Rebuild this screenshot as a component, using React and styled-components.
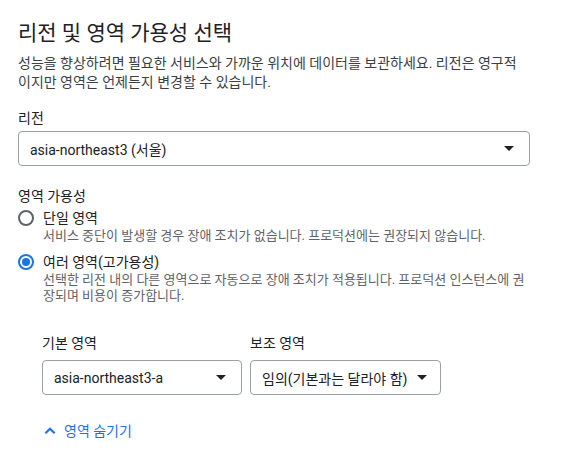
import React from "react";
import styled, { createGlobalStyle } from "styled-components";

const Global = createGlobalStyle`
  html, body { margin: 0; padding: 0; background: #fff; }
  body { font-family: Roboto, "Noto Sans CJK KR", sans-serif; color: #202124; }
`;

const Page = styled.div`
  width: 512px;
  padding: 19px 0 0 18px;
`;

const Title = styled.h1`
  margin: 0;
  font-size: 21px;
  line-height: 28px;
  font-weight: 400;
  color: #202124;
`;

const Desc = styled.p`
  margin: 7px 0 0;
  width: 508px;
  font-size: 14px;
  line-height: 19px;
  color: #3c4043;
`;

const FieldLabel = styled.div`
  margin-top: ${(p) => p.$mt || 0}px;
  font-size: 14px;
  line-height: 20px;
  color: #202124;
`;

const SelectBox = styled.div`
  margin-top: ${(p) => p.$mt ?? 7}px;
  box-sizing: border-box;
  width: ${(p) => (p.$width ? `${p.$width}px` : "auto")};
  height: 35px;
  display: ${(p) => (p.$inline ? "inline-flex" : "flex")};
  align-items: center;
  justify-content: space-between;
  gap: 10px;
  padding: 0 ${(p) => (p.$inline ? 13 : 15)}px 0 11px;
  border: 1px solid #9aa0a6;
  border-radius: 4px;
  font-size: 14px;
  color: #202124;
`;

const Caret = styled.span`
  width: 0;
  height: 0;
  border-left: 5px solid transparent;
  border-right: 5px solid transparent;
  border-top: 5px solid #202124;
  flex: none;
`;

const RadioGroup = styled.div`
  margin-top: 2px;
  display: flex;
  flex-direction: column;
  gap: 8px;
`;

const RadioRow = styled.div`
  display: grid;
  grid-template-columns: 16px 1fr;
  column-gap: 9px;
  align-items: center;
`;

const RadioCircle = styled.span`
  box-sizing: border-box;
  width: 16px;
  height: 16px;
  border-radius: 50%;
  border: 2px solid ${(p) => (p.$checked ? "#1a73e8" : "#5f6368")};
  display: flex;
  align-items: center;
  justify-content: center;
  &::after {
    content: "";
    width: 8px;
    height: 8px;
    border-radius: 50%;
    background: ${(p) => (p.$checked ? "#1a73e8" : "transparent")};
  }
`;

const RadioTitle = styled.span`
  font-size: 14px;
  line-height: 20px;
  color: #202124;
`;

const RadioHint = styled.div`
  grid-column: 2;
  max-width: 482px;
  font-size: 13px;
  line-height: 16px;
  color: #5f6368;
`;

const Zones = styled.div`
  margin-top: 29px;
  padding-left: 24px;
  display: flex;
  gap: 8px;
`;

const ZoneCol = styled.div`
  display: flex;
  flex-direction: column;
  align-items: flex-start;
`;

const ToggleLink = styled.div`
  margin-top: 26px;
  padding-left: 25px;
  display: flex;
  align-items: center;
  gap: 7px;
  font-size: 14px;
  line-height: 20px;
  color: #1a73e8;
`;

function Radio({ checked, title, hint }) {
  return (
    <RadioRow>
      <RadioCircle $checked={checked} />
      <RadioTitle>{title}</RadioTitle>
      <RadioHint>{hint}</RadioHint>
    </RadioRow>
  );
}

export default function App() {
  return (
    <Page>
      <Global />
      <Title>리전 및 영역 가용성 선택</Title>
      <Desc>
        성능을 향상하려면 필요한 서비스와 가까운 위치에 데이터를 보관하세요. 리전은 영구적이지만 영역은 언제든지 변경할 수 있습니다.
      </Desc>
      <FieldLabel $mt={16}>리전</FieldLabel>
      <SelectBox $mt={3}>
        <span>asia-northeast3 (서울)</span>
        <Caret />
      </SelectBox>
      <FieldLabel $mt={20}>영역 가용성</FieldLabel>
      <RadioGroup>
        <Radio
          title="단일 영역"
          hint="서비스 중단이 발생할 경우 장애 조치가 없습니다. 프로덕션에는 권장되지 않습니다."
        />
        <Radio
          checked
          title="여러 영역(고가용성)"
          hint="선택한 리전 내의 다른 영역으로 자동으로 장애 조치가 적용됩니다. 프로덕션 인스턴스에 권장되며 비용이 증가합니다."
        />
      </RadioGroup>
      <Zones>
        <ZoneCol>
          <FieldLabel>기본 영역</FieldLabel>
          <SelectBox $width={200}>
            <span>asia-northeast3-a</span>
            <Caret />
          </SelectBox>
        </ZoneCol>
        <ZoneCol>
          <FieldLabel>보조 영역</FieldLabel>
          <SelectBox $inline>
            <span>임의(기본과는 달라야 함)</span>
            <Caret />
          </SelectBox>
        </ZoneCol>
      </Zones>
      <ToggleLink>
        <svg width="14" height="14" viewBox="0 0 24 24" aria-hidden="true">
          <path d="M4 16 L12 8 L20 16" fill="none" stroke="#1a73e8" strokeWidth="3.5" />
        </svg>
        <span>영역 숨기기</span>
      </ToggleLink>
    </Page>
  );
}
